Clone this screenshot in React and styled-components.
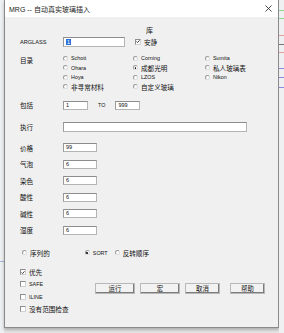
import React from 'react';
import styled, { createGlobalStyle } from 'styled-components';

const GlobalStyle = createGlobalStyle`
  html, body {
    margin: 0;
    padding: 0;
  }
  body {
    width: 284px;
    height: 333px;
    overflow: hidden;
    background: #e6e6e6;
    font-family: "Liberation Sans", "Noto Sans CJK SC", sans-serif;
    color: #111;
  }
`;

const Desktop = styled.div`
  display: flex;
  width: 284px;
  height: 333px;
`;

const Strip = styled.div`
  width: ${(p) => p.$w}px;
  flex: none;
  background: #eef0f2;
  display: flex;
  flex-direction: column;
`;

const StripLine = styled.div`
  height: 1px;
  margin-top: ${(p) => p.$top}px;
  background: ${(p) => p.$color};
`;

const Window = styled.div`
  width: 275px;
  height: 328px;
  flex: none;
  display: flex;
  flex-direction: column;
  border: 1px solid #8a8a8a;
  border-top: none;
  box-sizing: border-box;
  box-shadow: 0 2px 3px rgba(0, 0, 0, 0.25);
  background: #f0f0f0;
`;

const TitleBar = styled.div`
  height: 17px;
  flex: none;
  background: #fff;
  display: flex;
  align-items: center;
  justify-content: space-between;
  padding: 0 6px 0 4px;
  font-size: 7px;
  color: #222;
`;

const Body = styled.div`
  flex: 1;
  display: flex;
  flex-direction: column;
  padding: 8px 0 0 15px;
`;

const Row = styled.div`
  display: flex;
  align-items: center;
  height: ${(p) => p.$h || 10}px;
  margin-top: ${(p) => p.$mt || 0}px;
  flex: none;
`;

const Label = styled.div`
  width: 43px;
  flex: none;
  font-size: ${(p) => (p.$latin ? 5.6 : 6.6)}px;
  font-family: ${(p) => (p.$latin ? '"Liberation Sans", sans-serif' : '"Noto Sans CJK SC", sans-serif')};
`;

const Heading = styled.div`
  font-size: 7px;
  font-family: "Noto Sans CJK SC", sans-serif;
  padding-left: 126px;
`;

const Field = styled.div`
  width: ${(p) => p.$w}px;
  height: ${(p) => p.$h || 9}px;
  box-sizing: border-box;
  background: #fff;
  border: 1px solid #b4b4b4;
  border-top-color: #8c8c8c;
  border-left-color: #9a9a9a;
  font-size: 5.5px;
  line-height: ${(p) => (p.$h || 9) - 2}px;
  padding-left: 2px;
  flex: none;
`;

const Selected = styled.span`
  background: #2a6fd6;
  color: #fff;
  padding: 0 1px;
`;

const Option = styled.div`
  display: flex;
  align-items: center;
  gap: 3px;
  font-size: ${(p) => (p.$latin ? 5.4 : 6.6)}px;
  font-family: ${(p) => (p.$latin ? '"Liberation Sans", sans-serif' : '"Noto Sans CJK SC", sans-serif')};
  white-space: nowrap;
`;

const RadioDot = styled.span`
  width: 5px;
  height: 5px;
  border-radius: 50%;
  box-sizing: border-box;
  border: 1px solid #9a9a9a;
  border-right-color: #dcdcdc;
  border-bottom-color: #dcdcdc;
  background: #fff;
  flex: none;
  display: flex;
  align-items: center;
  justify-content: center;
  &::after {
    content: '';
    width: 1.6px;
    height: 1.6px;
    border-radius: 50%;
    background: ${(p) => (p.$on ? '#111' : 'transparent')};
  }
`;

const Box = styled.span`
  width: 6px;
  height: 6px;
  box-sizing: border-box;
  border: 1px solid #8e8e8e;
  border-right-color: #d0d0d0;
  border-bottom-color: #d0d0d0;
  background: #fff;
  flex: none;
  display: flex;
  align-items: center;
  justify-content: center;
`;

const CatalogGrid = styled.div`
  display: grid;
  grid-template-columns: 70px 72px auto;
  grid-auto-rows: 9.5px;
  align-items: center;
`;

const Small = styled.span`
  font-size: 5.4px;
  margin: 0 ${(p) => p.$mx || 0}px;
`;

const SortRow = styled.div`
  display: flex;
  align-items: center;
  height: 10px;
  margin-top: 13px;
  padding-left: 2px;
  gap: ${(p) => p.$gap || 0}px;
`;

const Bottom = styled.div`
  display: flex;
  margin-top: 8px;
`;

const Checks = styled.div`
  width: 75px;
  display: grid;
  grid-auto-rows: 12.3px;
  align-items: center;
`;

const Buttons = styled.div`
  display: flex;
  align-items: center;
  gap: 5px;
  margin-top: 17px;
  height: 12px;
`;

const Button = styled.div`
  width: ${(p) => p.$w}px;
  height: 11px;
  box-sizing: border-box;
  margin-left: ${(p) => p.$ml || 0}px;
  background: #f2f2f2;
  border: 1px solid #b8b8b8;
  box-shadow: inset -1px -1px 0 #7c7c7c;
  display: flex;
  align-items: center;
  justify-content: center;
  font-size: 6.4px;
  font-family: "Noto Sans CJK SC", sans-serif;
`;

const Check = () => (
  <svg width="5" height="5" viewBox="0 0 5 5">
    <path d="M0.6 2.4 L2 3.8 L4.4 1" fill="none" stroke="#111" strokeWidth="1" />
  </svg>
);

const Radio = ({ on, latin, children }) => (
  <Option $latin={latin}>
    <RadioDot $on={on} />
    {children}
  </Option>
);

const CheckBox = ({ on, latin, children }) => (
  <Option $latin={latin}>
    <Box>{on && <Check />}</Box>
    {children}
  </Option>
);

const catalogs = [
  ['Schott', true, false],
  ['Corning', true, false],
  ['Sumita', true, false],
  ['Ohara', true, false],
  ['成都光明', false, true],
  ['私人玻璃表', false, false],
  ['Hoya', true, false],
  ['LZOS', true, false],
  ['Nikon', true, false],
  ['非寻常材料', false, false],
  ['自定义玻璃', false, false],
];

const limits = [
  ['价格', '99'],
  ['气泡', '6'],
  ['染色', '6'],
  ['酸性', '6'],
  ['碱性', '6'],
  ['湿度', '6'],
];

function App() {
  return (
    <>
      <GlobalStyle />
      <Desktop>
        <Strip $w={4}>
          <StripLine $top={261} $color="#9fb4d8" />
        </Strip>
        <Window>
          <TitleBar>
            <span>MRG -- 自动真实玻璃插入</span>
            <svg width="7" height="7" viewBox="0 0 7 7">
              <path d="M0.5 0.5 L6.5 6.5 M6.5 0.5 L0.5 6.5" stroke="#333" strokeWidth="0.9" />
            </svg>
          </TitleBar>
          <Body>
            <Row>
              <Heading>库</Heading>
            </Row>
            <Row $h={11} $mt={1}>
              <Label $latin>ARGLASS</Label>
              <Field $w={62} $h={10}>
                <Selected>1</Selected>
              </Field>
              <Option style={{ marginLeft: 10 }}>
                <Box>
                  <Check />
                </Box>
                安静
              </Option>
            </Row>
            <Row $h={38} $mt={6.5} style={{ alignItems: 'flex-start' }}>
              <Label style={{ marginTop: 1 }}>目录</Label>
              <CatalogGrid>
                {catalogs.map(([name, latin, on]) => (
                  <Radio key={name} latin={latin} on={on}>
                    {name}
                  </Radio>
                ))}
              </CatalogGrid>
            </Row>
            <Row $mt={8.5}>
              <Label>包括</Label>
              <Field $w={25} $h={9}>1</Field>
              <Small $mx={10}>TO</Small>
              <Field $w={25} $h={9}>999</Field>
            </Row>
            <Row $mt={12}>
              <Label>执行</Label>
              <Field $w={184} $h={10} />
            </Row>
            {limits.map(([name, value], i) => (
              <Row key={name} $h={9} $mt={i === 0 ? 11 : 7.6}>
                <Label>{name}</Label>
                <Field $w={34}>{value}</Field>
              </Row>
            ))}
            <SortRow>
              <Radio>序列的</Radio>
              <span style={{ width: 35 }} />
              <Radio latin on>SORT</Radio>
              <span style={{ width: 7 }} />
              <Radio>反转顺序</Radio>
            </SortRow>
            <Bottom>
              <Checks>
                <CheckBox on>优先</CheckBox>
                <CheckBox latin>SAFE</CheckBox>
                <CheckBox latin>ILINE</CheckBox>
                <CheckBox>没有范围检查</CheckBox>
              </Checks>
              <Buttons>
                <Button $w={40}>运行</Button>
                <Button $w={40}>宏</Button>
                <Button $w={35}>取消</Button>
                <Button $w={35} $ml={5}>帮助</Button>
              </Buttons>
            </Bottom>
          </Body>
        </Window>
        <Strip $w={5}>
          <StripLine $top={10} $color="#8fd88f" />
          <StripLine $top={7} $color="#8fd88f" />
          <StripLine $top={16} $color="#e0a0a0" />
          <StripLine $top={8} $color="#777" />
          <StripLine $top={7} $color="#e0a0a0" />
          <StripLine $top={15} $color="#8a8ae0" />
          <StripLine $top={8} $color="#8a8ae0" />
          <StripLine $top={9} $color="#8a8ae0" />
        </Strip>
      </Desktop>
    </>
  );
}

export default App;
